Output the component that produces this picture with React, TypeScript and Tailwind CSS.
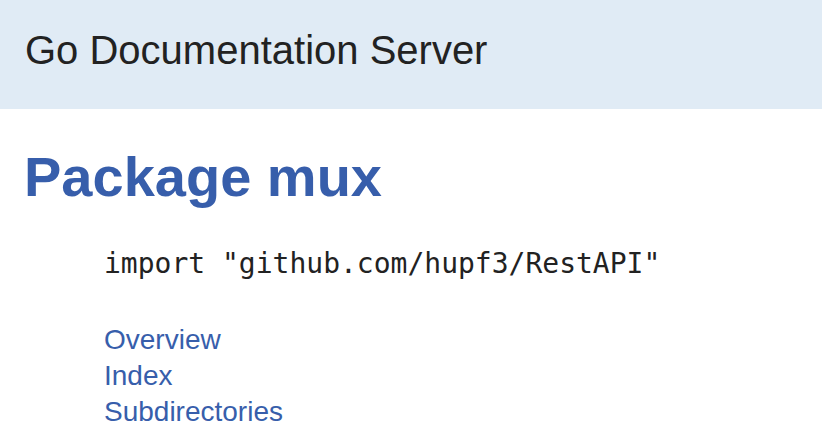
import React from 'react';

const links = ['Overview', 'Index', 'Subdirectories'];

const App = () => {
  return (
    <div className="w-[822px] h-[440px] overflow-hidden bg-white font-['Liberation_Sans',Arial,sans-serif] text-[#222]">
      {/* Top bar */}
      <header className="h-[109px] bg-[#e0ebf5] px-[25px] pt-[30px]">
        <div className="text-[40px] leading-none">Go Documentation Server</div>
      </header>

      <main className="px-[24px]">
        <h1 className="mt-[40px] text-[56px] leading-none font-bold text-[#375eab]">Package mux</h1>

        <div className="pl-[80px]">
          <pre className="mt-[45px] font-['DejaVu_Sans_Mono',monospace] text-[28px] leading-none text-[#222]">
            import "github.com/hupf3/RestAPI"
          </pre>

          <ul className="mt-[44px] text-[28px] leading-[36px]">
            {links.map((l) => (
              <li key={l}>
                <a href={'#pkg-' + l.toLowerCase()} className="text-[#375eab] no-underline">
                  {l}
                </a>
              </li>
            ))}
          </ul>
        </div>
      </main>
    </div>
  );
};

export default App;
